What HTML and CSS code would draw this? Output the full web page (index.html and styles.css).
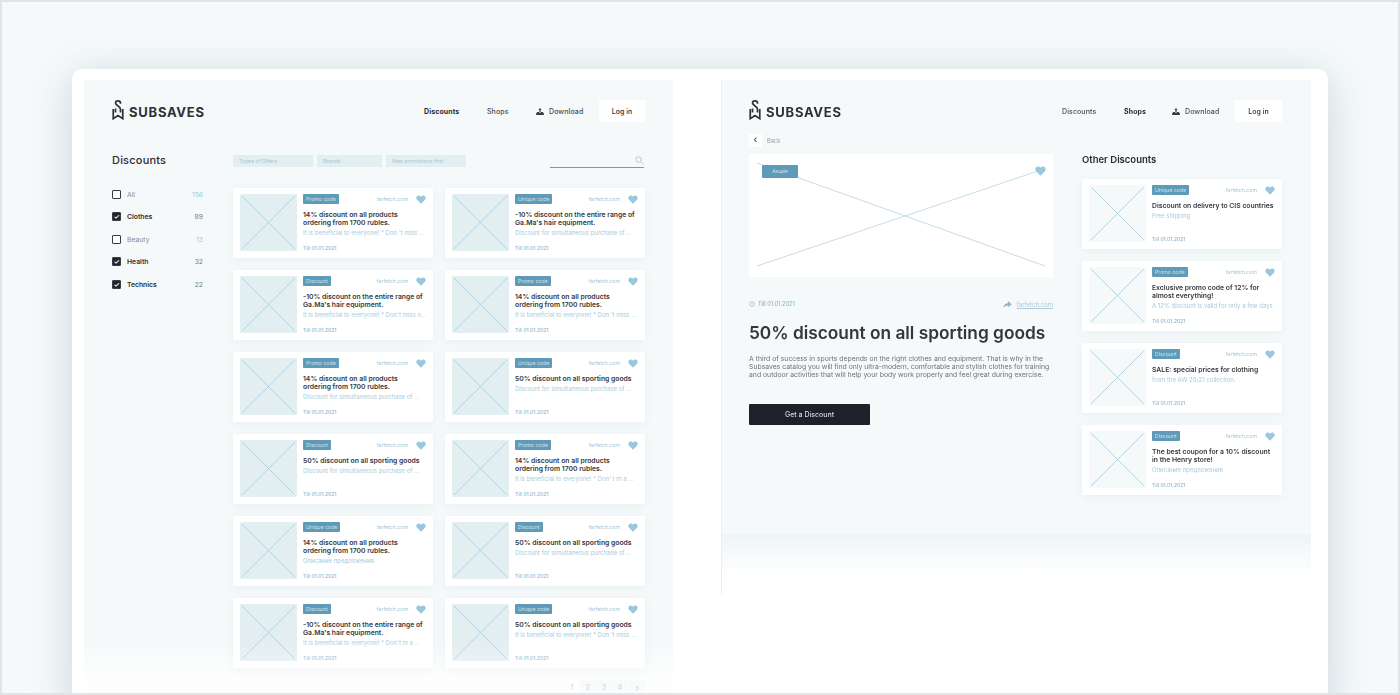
FILE: index.html
```html
<!DOCTYPE html>
<html lang="en">
<head>
  <meta charset="UTF-8">
  <meta name="viewport" content="width=device-width, initial-scale=1.0">
  <title>Subsaves</title>
  <link rel="stylesheet" href="styles.css">
</head>
<body>
  <svg class="defs" width="0" height="0" aria-hidden="true">
    <symbol id="logo" viewBox="0 0 12 21">
      <path d="M8.6 4V3.2C8.6 1.900 7.600 1 6 1S3.400 1.900 3.400 3.200C3.400 6 8.600 6 8.600 9.600V13M3.400 13V9M1 9.500V19.600L6 16.400L11 19.600V9.500" fill="none" stroke="currentColor" stroke-width="1.800"/>
    </symbol>
    <symbol id="heart" viewBox="0 0 12 11">
      <path d="M6 10.600L1.200 5.800C-.3 4.200.1 1.700 2 .8 3.400.2 5 .6 6 2 7 .6 8.600.2 10 .8c1.900.9 2.300 3.400.8 5z" fill="currentColor"/>
    </symbol>
    <symbol id="cross" viewBox="0 0 56 56" preserveAspectRatio="none">
      <path d="M2 2L54 54M54 2L2 54" fill="none" stroke="currentColor" stroke-width=".8"/>
    </symbol>
    <symbol id="cloud" viewBox="0 0 10 9">
      <path d="M5 0L7 2.500H5.800V5H4.200V2.500H3zM0 9V7L1.500 5H3.500L5 6.300 6.500 5H8.500L10 7V9z" fill="currentColor"/>
    </symbol>
  </svg>

  <main class="frame">
    <section class="panel panel-list">
      <header class="topbar">
        <a class="brand"><svg class="brand-mark"><use href="#logo"/></svg><span>Subsaves</span></a>
        <nav class="nav">
          <a class="nav-link nav-active nav-first">Discounts</a>
          <a class="nav-link nav-second">Shops</a>
          <a class="nav-link nav-download"><svg class="cloud"><use href="#cloud"/></svg>Download</a>
          <a class="login">Log in</a>
        </nav>
      </header>

      <div class="columns">
        <aside class="sidebar">
          <h2 class="sidebar-title">Discounts</h2>
          <ul class="filter-list">
            <li class="filter-item"><span class="box"></span><span class="filter-name">All</span><span class="filter-count count-blue">156</span></li>
            <li class="filter-item is-on"><span class="box">&#10003;</span><span class="filter-name">Clothes</span><span class="filter-count">89</span></li>
            <li class="filter-item"><span class="box"></span><span class="filter-name">Beauty</span><span class="filter-count count-blue">13</span></li>
            <li class="filter-item is-on"><span class="box">&#10003;</span><span class="filter-name">Health</span><span class="filter-count">32</span></li>
            <li class="filter-item is-on"><span class="box">&#10003;</span><span class="filter-name">Technics</span><span class="filter-count">22</span></li>
          </ul>
        </aside>

        <div class="content">
          <div class="toolbar">
            <span class="select select-a">Types of Offers</span>
            <span class="select select-b">Brands</span>
            <span class="select select-c">New promotions first</span>
            <div class="search">
              <svg class="search-icon" viewBox="0 0 10 10"><circle cx="4" cy="4" r="3" fill="none" stroke="currentColor"/><path d="M6.300 6.300L9.500 9.500" stroke="currentColor"/></svg>
            </div>
          </div>

          <div class="card-grid">
            <article class="card">
              <svg class="thumb"><use href="#cross"/></svg>
              <div class="card-body">
                <div class="card-top"><span class="tag">Promo code</span><span class="shop">farfetch.com</span><svg class="heart"><use href="#heart"/></svg></div>
                <h3 class="card-title">14% discount on all products ordering from 1700 rubles.</h3>
                <p class="card-text">It is beneficial to everyone! * Don 't miss ...</p>
                <time class="card-date">Till 01.01.2021</time>
              </div>
            </article>
            <article class="card">
              <svg class="thumb"><use href="#cross"/></svg>
              <div class="card-body">
                <div class="card-top"><span class="tag">Unique code</span><span class="shop">farfetch.com</span><svg class="heart"><use href="#heart"/></svg></div>
                <h3 class="card-title">-10% discount on the entire range of Ga.Ma's hair equipment.</h3>
                <p class="card-text">Discount for simultaneous purchase of ...</p>
                <time class="card-date">Till 01.01.2021</time>
              </div>
            </article>
            <article class="card">
              <svg class="thumb"><use href="#cross"/></svg>
              <div class="card-body">
                <div class="card-top"><span class="tag">Discount</span><span class="shop">farfetch.com</span><svg class="heart"><use href="#heart"/></svg></div>
                <h3 class="card-title">-10% discount on the entire range of Ga.Ma's hair equipment.</h3>
                <p class="card-text">It is beneficial to everyone! * Don't miss o...</p>
                <time class="card-date">Till 01.01.2021</time>
              </div>
            </article>
            <article class="card">
              <svg class="thumb"><use href="#cross"/></svg>
              <div class="card-body">
                <div class="card-top"><span class="tag">Promo code</span><span class="shop">farfetch.com</span><svg class="heart"><use href="#heart"/></svg></div>
                <h3 class="card-title">14% discount on all products ordering from 1700 rubles.</h3>
                <p class="card-text">It is beneficial to everyone! * Don 't miss ...</p>
                <time class="card-date">Till 01.01.2021</time>
              </div>
            </article>
            <article class="card">
              <svg class="thumb"><use href="#cross"/></svg>
              <div class="card-body">
                <div class="card-top"><span class="tag">Promo code</span><span class="shop">farfetch.com</span><svg class="heart"><use href="#heart"/></svg></div>
                <h3 class="card-title">14% discount on all products ordering from 1700 rubles.</h3>
                <p class="card-text">Discount for simultaneous purchase of ...</p>
                <time class="card-date">Till 01.01.2021</time>
              </div>
            </article>
            <article class="card">
              <svg class="thumb"><use href="#cross"/></svg>
              <div class="card-body">
                <div class="card-top"><span class="tag">Unique code</span><span class="shop">farfetch.com</span><svg class="heart"><use href="#heart"/></svg></div>
                <h3 class="card-title">50% discount on all sporting goods</h3>
                <p class="card-text">Discount for simultaneous purchase of ...</p>
                <time class="card-date">Till 01.01.2021</time>
              </div>
            </article>
            <article class="card">
              <svg class="thumb"><use href="#cross"/></svg>
              <div class="card-body">
                <div class="card-top"><span class="tag">Discount</span><span class="shop">farfetch.com</span><svg class="heart"><use href="#heart"/></svg></div>
                <h3 class="card-title">50% discount on all sporting goods</h3>
                <p class="card-text">Discount for simultaneous purchase of ...</p>
                <time class="card-date">Till 01.01.2021</time>
              </div>
            </article>
            <article class="card">
              <svg class="thumb"><use href="#cross"/></svg>
              <div class="card-body">
                <div class="card-top"><span class="tag">Promo code</span><span class="shop">farfetch.com</span><svg class="heart"><use href="#heart"/></svg></div>
                <h3 class="card-title">14% discount on all products ordering from 1700 rubles.</h3>
                <p class="card-text">It is beneficial to everyone! * Don' t m a ...</p>
                <time class="card-date">Till 01.01.2021</time>
              </div>
            </article>
            <article class="card">
              <svg class="thumb"><use href="#cross"/></svg>
              <div class="card-body">
                <div class="card-top"><span class="tag">Unique code</span><span class="shop">farfetch.com</span><svg class="heart"><use href="#heart"/></svg></div>
                <h3 class="card-title">14% discount on all products ordering from 1700 rubles.</h3>
                <p class="card-text">Описание предложения</p>
                <time class="card-date">Till 01.01.2021</time>
              </div>
            </article>
            <article class="card">
              <svg class="thumb"><use href="#cross"/></svg>
              <div class="card-body">
                <div class="card-top"><span class="tag">Discount</span><span class="shop">farfetch.com</span><svg class="heart"><use href="#heart"/></svg></div>
                <h3 class="card-title">50% discount on all sporting goods</h3>
                <p class="card-text">Discount for simultaneous purchase of ...</p>
                <time class="card-date">Till 01.01.2021</time>
              </div>
            </article>
            <article class="card">
              <svg class="thumb"><use href="#cross"/></svg>
              <div class="card-body">
                <div class="card-top"><span class="tag">Discount</span><span class="shop">farfetch.com</span><svg class="heart"><use href="#heart"/></svg></div>
                <h3 class="card-title">-10% discount on the entire range of Ga.Ma's hair equipment.</h3>
                <p class="card-text">It is beneficial to everyone! * Don't m a ...</p>
                <time class="card-date">Till 01.01.2021</time>
              </div>
            </article>
            <article class="card">
              <svg class="thumb"><use href="#cross"/></svg>
              <div class="card-body">
                <div class="card-top"><span class="tag">Unique code</span><span class="shop">farfetch.com</span><svg class="heart"><use href="#heart"/></svg></div>
                <h3 class="card-title">50% discount on all sporting goods</h3>
                <p class="card-text">It is beneficial to everyone! * Don 't miss ...</p>
                <time class="card-date">Till 01.01.2021</time>
              </div>
            </article>
          </div>

          <div class="pager">
            <span class="page-num page-current">1</span>
            <span class="page-num">2</span>
            <span class="page-num">3</span>
            <span class="page-num">4</span>
            <span class="page-num page-next">&#8250;</span>
          </div>
        </div>
      </div>
    </section>

    <section class="panel panel-detail">
      <header class="topbar">
        <a class="brand"><svg class="brand-mark"><use href="#logo"/></svg><span>Subsaves</span></a>
        <nav class="nav">
          <a class="nav-link nav-first">Discounts</a>
          <a class="nav-link nav-active nav-second">Shops</a>
          <a class="nav-link nav-download"><svg class="cloud"><use href="#cloud"/></svg>Download</a>
          <a class="login">Log in</a>
        </nav>
      </header>

      <a class="back"><span class="back-btn">&#8249;</span>Back</a>

      <div class="detail-columns">
        <div class="detail-main">
          <div class="hero">
            <svg class="hero-cross" viewBox="0 0 304 123" preserveAspectRatio="none"><path d="M8 9L296 112M8 112L292 16" fill="none" stroke="currentColor" stroke-width=".8"/></svg>
            <span class="tag hero-tag">Акция</span>
            <svg class="heart hero-heart"><use href="#heart"/></svg>
          </div>
          <div class="meta">
            <time class="meta-date"><svg class="clock" viewBox="0 0 10 10"><circle cx="5" cy="5" r="4" fill="none" stroke="currentColor"/><path d="M5 2.500V5.500" stroke="currentColor"/></svg>Till 01.01.2021</time>
            <span class="meta-link"><svg class="share" viewBox="0 0 12 10"><path d="M7 0L12 4.500 7 9V6.300C4 6.300 2 7.500 0 10 .7 6 3 3.300 7 2.800z" fill="currentColor"/></svg><u>farfetch.com</u></span>
          </div>
          <h1 class="detail-title">50% discount on all sporting goods</h1>
          <p class="detail-text">A third of success in sports depends on the right clothes and equipment. That is why in the Subsaves catalog you will find only ultra-modern, comfortable and stylish clothes for training and outdoor activities that will help your body work properly and feel great during exercise.</p>
          <a class="cta">Get a Discount</a>
        </div>

        <aside class="detail-side">
          <h2 class="side-title">Other Discounts</h2>
          <div class="side-list">
            <article class="card">
              <svg class="thumb thumb-light"><use href="#cross"/></svg>
              <div class="card-body">
                <div class="card-top"><span class="tag">Unique code</span><span class="shop">farfetch.com</span><svg class="heart"><use href="#heart"/></svg></div>
                <h3 class="card-title">Discount on delivery to CIS countries</h3>
                <p class="card-text">Free shipping</p>
                <time class="card-date">Till 01.01.2021</time>
              </div>
            </article>
            <article class="card">
              <svg class="thumb thumb-light"><use href="#cross"/></svg>
              <div class="card-body">
                <div class="card-top"><span class="tag">Promo code</span><span class="shop">farfetch.com</span><svg class="heart"><use href="#heart"/></svg></div>
                <h3 class="card-title">Exclusive promo code of 12% for almost everything!</h3>
                <p class="card-text">A 12% discount is valid for only a few days</p>
                <time class="card-date">Till 01.01.2021</time>
              </div>
            </article>
            <article class="card">
              <svg class="thumb thumb-light"><use href="#cross"/></svg>
              <div class="card-body">
                <div class="card-top"><span class="tag">Discount</span><span class="shop">farfetch.com</span><svg class="heart"><use href="#heart"/></svg></div>
                <h3 class="card-title">SALE: special prices for clothing</h3>
                <p class="card-text">from the AW 20/21 collection.</p>
                <time class="card-date">Till 01.01.2021</time>
              </div>
            </article>
            <article class="card">
              <svg class="thumb thumb-light"><use href="#cross"/></svg>
              <div class="card-body">
                <div class="card-top"><span class="tag">Discount</span><span class="shop">farfetch.com</span><svg class="heart"><use href="#heart"/></svg></div>
                <h3 class="card-title">The best coupon for a 10% discount in the Henry store!</h3>
                <p class="card-text">Описание предложения</p>
                <time class="card-date">Till 01.01.2021</time>
              </div>
            </article>
          </div>
        </aside>
      </div>
    </section>
  </main>
</body>
</html>
```

FILE: styles.css
```css
* {
  box-sizing: border-box;
}

html,
body {
  margin: 0;
  height: 100%;
}

body {
  height: 695px;
  padding: 67px 0 0 70px;
  overflow: hidden;
  border: 2px solid #e2e3e4;
  background: #f5f9fa;
  font-family: Inter, "Liberation Sans", sans-serif;
  color: #2b2c33;
}

h1,
h2,
h3,
p,
ul {
  margin: 0;
  padding: 0;
}

.defs {
  position: absolute;
}

.frame {
  display: flex;
  gap: 48px;
  width: 1256px;
  height: 640px;
  padding: 11px 17px 0 12px;
  background: #fff;
  border-radius: 10px;
  box-shadow: 0 8px 40px rgba(70, 100, 120, 0.24);
  filter: blur(0.45px);
}

.panel {
  position: relative;
  width: 589px;
  flex: none;
}

.panel-list {
  height: 628px;
  padding: 20px 28px 0;
  background: linear-gradient(#f5f9fa 565px, #fff 618px);
}

/* fades the last row of cards into the frame */
.panel-list::after {
  content: "";
  position: absolute;
  left: 0;
  right: 0;
  bottom: 0;
  height: 70px;
  background: linear-gradient(rgba(255, 255, 255, 0), rgba(255, 255, 255, 0.65));
  pointer-events: none;
}

.panel-detail {
  width: 590px;
  height: 515px;
  padding: 20px 29px 0 27px;
  border-left: 1px solid #e9eff2;
  background: linear-gradient(#f5f9fa 454px, #eef5f7 455px, #fff 495px);
}

.topbar {
  display: flex;
  align-items: center;
  justify-content: space-between;
  height: 22px;
}

.brand {
  display: flex;
  align-items: center;
  gap: 5px;
  margin-top: 2px;
  font-size: 13px;
  font-weight: 700;
  letter-spacing: 0.75px;
  text-transform: uppercase;
  color: #2f3036;
}

.brand-mark {
  width: 12px;
  height: 20px;
  margin-top: -4px;
}

.nav {
  display: flex;
  align-items: center;
}

.nav-link {
  font-size: 7px;
  font-weight: 500;
  letter-spacing: 0.1px;
  color: #4a4c53;
}

.nav-active {
  font-weight: 700;
  color: #2b2c33;
}

.nav-first {
  width: 63px;
}

.nav-second {
  width: 49px;
}

.panel-detail .nav-first {
  width: 62px;
}

.panel-detail .nav-second {
  width: 48px;
}

.nav-download {
  display: flex;
  align-items: center;
  gap: 5px;
  width: 63px;
}

.cloud {
  width: 8px;
  height: 7px;
  color: #3a3c44;
}

.login {
  width: 46px;
  height: 22px;
  background: #fff;
  font-size: 7px;
  font-weight: 500;
  line-height: 23px;
  text-align: center;
}

.panel-detail .login {
  width: 47px;
}

.columns {
  display: flex;
  margin-top: 30px;
}

.sidebar {
  width: 91px;
  margin-right: 30px;
}

.sidebar-title {
  font-size: 11px;
  font-weight: 500;
  line-height: 16px;
  letter-spacing: 0.2px;
}

.filter-list {
  margin-top: 15px;
  list-style: none;
}

.filter-item {
  display: flex;
  align-items: center;
  height: 22.500px;
  font-size: 6.800px;
  color: #8b8e94;
}

.filter-item.is-on {
  font-weight: 600;
  color: #2f3036;
}

.box {
  width: 9px;
  height: 9px;
  margin-right: 6px;
  border: 1px solid #3a3c44;
  border-radius: 1px;
  background: #fff;
  font-size: 7px;
  line-height: 7px;
  text-align: center;
}

.is-on .box {
  background: #23242c;
  color: #fff;
}

.filter-name {
  flex: 1;
}

.filter-count {
  font-weight: 400;
  color: #777a80;
}

.count-blue {
  color: #a5c6d6;
}

.content {
  width: 412px;
}

.toolbar {
  display: flex;
  align-items: flex-start;
  height: 36px;
  padding-top: 3px;
}

.select {
  height: 12px;
  margin-right: 4px;
  padding-left: 6px;
  background: #e3eef1;
  font-size: 5.200px;
  line-height: 12px;
  color: #a5c6d6;
}

.select-a {
  width: 80px;
}

.select-b {
  width: 65px;
}

.select-c {
  width: 80px;
}

.search {
  display: flex;
  justify-content: flex-end;
  width: 94px;
  height: 13px;
  margin-left: 80px;
  border-bottom: 1px solid #8e9396;
}

.search-icon {
  width: 9px;
  height: 9px;
  margin-top: 1px;
  color: #a5c6d6;
}

.card-grid {
  display: grid;
  grid-template-columns: 200px 200px;
  gap: 12px;
}

.side-list {
  display: flex;
  flex-direction: column;
  gap: 12px;
}

.card {
  display: flex;
  gap: 6px;
  height: 70px;
  padding: 6px 7px;
  background: #fff;
  border-radius: 2px;
  box-shadow: 0 2px 8px rgba(90, 120, 140, 0.08);
}

.thumb {
  flex: none;
  width: 57px;
  height: 57px;
  background: #e3eef1;
  color: #a9cbdb;
}

.thumb-light {
  background: #f5f9fa;
}

.card-body {
  display: flex;
  flex-direction: column;
  flex: 1;
  min-width: 0;
}

.card-top {
  display: flex;
  align-items: center;
  height: 10px;
}

.tag {
  height: 10px;
  padding: 0 3px;
  background: #5f9ab8;
  border-radius: 1px;
  font-size: 5.200px;
  line-height: 10px;
  color: #cfe2ec;
}

.shop {
  margin-left: auto;
  font-size: 5.200px;
  color: #a5c6d6;
}

.heart {
  width: 10px;
  height: 9px;
  margin-left: 8px;
  color: #99c7dd;
}

.card-title {
  margin-top: 6.500px;
  font-size: 6.800px;
  font-weight: 600;
  line-height: 8.400px;
  color: #35363d;
}

.card-text {
  margin-top: 2px;
  font-size: 6px;
  line-height: 8px;
  white-space: nowrap;
  color: #a9cbdb;
}

.card-date {
  margin-top: auto;
  font-size: 5px;
  font-weight: 500;
  line-height: 7px;
  color: #8db5c9;
}

.pager {
  display: flex;
  justify-content: flex-end;
  margin-top: 12px;
  font-size: 7px;
  color: #a9adb1;
}

.page-num {
  width: 16px;
  height: 16px;
  background: #f3f7f9;
  line-height: 16px;
  text-align: center;
}

.page-current {
  background: transparent;
}

.page-next {
  margin-left: 1px;
  font-size: 11px;
}

.back {
  display: flex;
  align-items: center;
  gap: 5px;
  height: 13px;
  margin-top: 12px;
  font-size: 5.800px;
  color: #9ea2a6;
}

.back-btn {
  width: 13px;
  height: 13px;
  background: #fff;
  font-size: 10px;
  line-height: 11px;
  text-align: center;
  color: #2b2c33;
}

.detail-columns {
  display: flex;
  justify-content: space-between;
  margin-top: 7px;
}

.detail-main {
  width: 304px;
}

.hero {
  position: relative;
  height: 123px;
  background: #fff;
}

.hero-cross {
  display: block;
  width: 100%;
  height: 100%;
  color: #b8d3e0;
}

.hero-tag {
  position: absolute;
  top: 11px;
  left: 13px;
  width: 36px;
  height: 13px;
  line-height: 13px;
  text-align: center;
}

.hero-heart {
  position: absolute;
  top: 12px;
  right: 7px;
  width: 11px;
  height: 10px;
  margin: 0;
}

.meta {
  display: flex;
  align-items: center;
  justify-content: space-between;
  height: 10px;
  margin-top: 22px;
  font-size: 5.500px;
  color: #8db5c9;
}

.meta-date {
  display: flex;
  align-items: center;
  gap: 3px;
  font-weight: 500;
}

.clock {
  width: 6px;
  height: 6px;
}

.meta-link {
  display: flex;
  align-items: center;
  gap: 5px;
  font-size: 6px;
  color: #a9cbdb;
}

.share {
  width: 9px;
  height: 7px;
  color: #8db5c9;
}

.detail-title {
  margin-top: 12px;
  font-size: 17.300px;
  font-weight: 600;
  line-height: 24px;
  white-space: nowrap;
  color: #35363d;
}

.detail-text {
  margin-top: 10px;
  font-size: 6.850px;
  line-height: 8.200px;
  color: #6f7278;
}

.cta {
  display: block;
  width: 121px;
  height: 21px;
  margin-top: 24px;
  background: #1f2029;
  border-radius: 1px;
  font-size: 7px;
  font-weight: 500;
  line-height: 21px;
  text-align: center;
  color: #d9dbe0;
}

.detail-side {
  width: 200px;
}

.side-title {
  height: 18px;
  margin-bottom: 7px;
  font-size: 9.500px;
  font-weight: 600;
  line-height: 11px;
}
```
